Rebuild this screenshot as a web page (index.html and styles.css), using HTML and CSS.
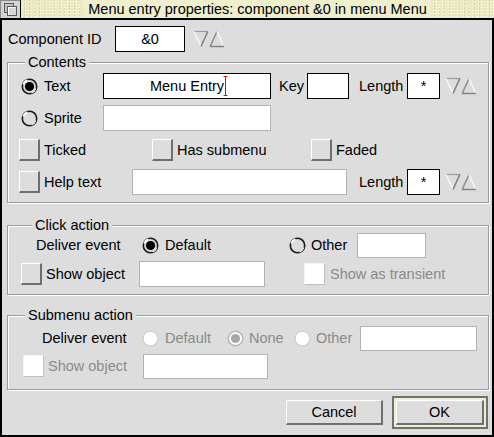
FILE: index.html
```html
<!DOCTYPE html>
<html lang="en">
<head>
<meta charset="utf-8">
<title>Menu entry properties</title>
<link rel="stylesheet" href="styles.css">
</head>
<body>
<svg class="defs" width="0" height="0" aria-hidden="true">
  <defs>
    <symbol id="radio" viewBox="0 0 17 17">
      <circle cx="8.5" cy="8.5" r="7.2" fill="#dddddd" stroke="#1a1a1a" stroke-width="1.6"/>
      <path d="M2.1 6.4 A7.2 7.2 0 0 1 6.4 2.1" fill="none" stroke="#ffffff" stroke-width="1.8"/>
      <path d="M14.9 10.6 A7.2 7.2 0 0 1 10.6 14.9" fill="none" stroke="#f0f0f0" stroke-width="1.2"/>
    </symbol>
    <symbol id="radio-on" viewBox="0 0 17 17">
      <circle cx="8.5" cy="8.5" r="7.2" fill="#dddddd" stroke="#1a1a1a" stroke-width="1.6"/>
      <path d="M2.1 6.4 A7.2 7.2 0 0 1 6.4 2.1" fill="none" stroke="#ffffff" stroke-width="1.8"/>
      <path d="M14.9 10.6 A7.2 7.2 0 0 1 10.6 14.9" fill="none" stroke="#f0f0f0" stroke-width="1.2"/>
      <circle cx="8.5" cy="8.5" r="4.6" fill="#000000"/>
    </symbol>
    <symbol id="radio-faded" viewBox="0 0 17 17">
      <circle cx="8.5" cy="8.5" r="7.4" fill="#ffffff" stroke="#c4c4c4" stroke-width="1"/>
    </symbol>
    <symbol id="radio-faded-on" viewBox="0 0 17 17">
      <circle cx="8.5" cy="8.5" r="7.2" fill="#ffffff" stroke="#b4b4b4" stroke-width="1.4"/>
      <circle cx="8.5" cy="8.5" r="4.6" fill="#a8a8a8"/>
    </symbol>
    <symbol id="adjusters" viewBox="0 0 33 18">
      <line x1="1" y1="1.5" x2="15" y2="1.5" stroke="#9a9a9a" stroke-width="1.2"/>
      <line x1="1.2" y1="1.5" x2="8" y2="16.5" stroke="#f6f6f6" stroke-width="1.6"/>
      <line x1="14.8" y1="1.5" x2="8" y2="16.5" stroke="#7c7c7c" stroke-width="1.5"/>
      <line x1="17.2" y1="16.5" x2="24" y2="1.5" stroke="#8c8c8c" stroke-width="1.5"/>
      <line x1="24" y1="1.5" x2="30.8" y2="16.5" stroke="#f6f6f6" stroke-width="1.6"/>
      <line x1="17" y1="16.5" x2="31" y2="16.5" stroke="#808080" stroke-width="1.4"/>
    </symbol>
  </defs>
</svg>
<div class="win">
  <div class="titlebar">
    <div class="backicon">
      <svg width="20" height="18" viewBox="0 0 20 18">
        <rect x="0" y="0" width="20" height="18" fill="#d4d4d4"/>
        <line x1="0" y1="0.5" x2="20" y2="0.5" stroke="#8a8a8a"/>
        <line x1="0.5" y1="0" x2="0.5" y2="18" stroke="#8a8a8a"/>
        <rect x="4.5" y="3.5" width="9" height="9" fill="#c8c8c8" stroke="#5a5a5a"/>
        <rect x="7.5" y="6.5" width="9" height="9" fill="#d8d8d8" stroke="#5a5a5a"/>
        <line x1="8.5" y1="7.5" x2="15.5" y2="7.5" stroke="#ffffff"/>
        <line x1="8.5" y1="7.5" x2="8.5" y2="14.5" stroke="#ffffff"/>
      </svg>
    </div>
    <div class="titlearea"><span class="titletext">Menu entry properties: component &amp;0 in menu Menu</span></div>
  </div>

  <div class="body">
    <div class="row idrow">
      <span class="lbl lbl-cid">Component ID</span>
      <span class="field black f-cid">&amp;0</span>
      <svg class="adjust adj-cid"><use href="#adjusters"/></svg>
    </div>

    <div class="frame f-contents">
      <div class="legend lg-contents">Contents</div>
      <div class="row c-row1">
        <svg class="radio rad-first"><use href="#radio-on"/></svg>
        <span class="lbl lbl-text">Text</span>
        <span class="field black f-text">Menu Entry<span class="caret"><svg width="5" height="20" viewBox="0 0 5 20"><line x1="2.5" y1="0" x2="2.5" y2="20" stroke="#d01010" stroke-width="1"/><line x1="0.5" y1="0.5" x2="4.5" y2="0.5" stroke="#d01010"/><line x1="0.5" y1="19.5" x2="4.5" y2="19.5" stroke="#d01010"/></svg></span></span>
        <span class="lbl lbl-key">Key</span>
        <span class="field black f-key"></span>
        <span class="lbl lbl-len">Length</span>
        <span class="field black f-len">*</span>
        <svg class="adjust adj-row"><use href="#adjusters"/></svg>
      </div>
      <div class="row c-row">
        <svg class="radio rad-first"><use href="#radio"/></svg>
        <span class="lbl lbl-text">Sprite</span>
        <span class="field grey f-text"></span>
      </div>
      <div class="row c-row">
        <span class="cb cb-first"></span>
        <span class="lbl lbl-ticked">Ticked</span>
        <span class="cb"></span>
        <span class="lbl lbl-sub">Has submenu</span>
        <span class="cb"></span>
        <span class="lbl lbl-cbtext">Faded</span>
      </div>
      <div class="row c-row">
        <span class="cb cb-first"></span>
        <span class="lbl lbl-help">Help text</span>
        <span class="field grey f-help"></span>
        <span class="lbl lbl-len2">Length</span>
        <span class="field black f-len">*</span>
        <svg class="adjust adj-row"><use href="#adjusters"/></svg>
      </div>
    </div>

    <div class="frame f-click">
      <div class="legend lg-click">Click action</div>
      <div class="row k-row1">
        <span class="lbl lbl-deliver1">Deliver event</span>
        <svg class="radio"><use href="#radio-on"/></svg>
        <span class="lbl lbl-default1">Default</span>
        <svg class="radio"><use href="#radio"/></svg>
        <span class="lbl lbl-other1">Other</span>
        <span class="field grey f-other1"></span>
      </div>
      <div class="row k-row2">
        <span class="cb cb-show1"></span>
        <span class="lbl lbl-show1">Show object</span>
        <span class="field grey f-show1"></span>
        <span class="cb faded cb-trans"></span>
        <span class="lbl faded-text lbl-trans">Show as transient</span>
      </div>
    </div>

    <div class="frame f-submenu">
      <div class="legend lg-submenu">Submenu action</div>
      <div class="row s-row1">
        <span class="lbl lbl-deliver2">Deliver event</span>
        <svg class="radio"><use href="#radio-faded"/></svg>
        <span class="lbl faded-text lbl-default2">Default</span>
        <svg class="radio"><use href="#radio-faded-on"/></svg>
        <span class="lbl faded-text lbl-none">None</span>
        <svg class="radio"><use href="#radio-faded"/></svg>
        <span class="lbl faded-text lbl-other2">Other</span>
        <span class="field grey f-other2"></span>
      </div>
      <div class="row s-row2">
        <span class="cb faded cb-show2"></span>
        <span class="lbl faded-text lbl-show2">Show object</span>
        <span class="field grey f-show2"></span>
      </div>
    </div>

    <div class="btnrow">
      <span class="btn btn-cancel">Cancel</span>
      <span class="okouter"><span class="btn btn-ok">OK</span></span>
    </div>
  </div>
</div>
</body>
</html>
```

FILE: styles.css
```css
* { box-sizing: border-box; }
html, body { margin: 0; padding: 0; }
body {
  width: 494px;
  height: 437px;
  overflow: hidden;
  background: #dddddd;
  font-family: "Liberation Sans", Arial, sans-serif;
  font-size: 14.5px;
  color: #000;
}
.defs { display: block; width: 0; height: 0; overflow: hidden; }

.win { width: 494px; height: 437px; display: flex; flex-direction: column; }

/* title bar */
.titlebar { flex: none; height: 20px; display: flex; border-bottom: 2px solid #000; }
.backicon { flex: none; width: 21px; height: 18px; border-right: 1px solid #000; }
.backicon svg { display: block; }
.titlearea {
  flex: 1;
  display: flex;
  justify-content: center;
  align-items: center;
  background-color: #ebe9c2;
  background-image:
    radial-gradient(circle, #fbfbee 0.7px, transparent 0.9px),
    radial-gradient(circle, #d9d6a6 0.6px, transparent 0.8px);
  background-size: 3px 3px, 5px 4px;
  background-position: 0 0, 1px 2px;
}
.titletext { background: #efeecd; padding: 0 4px; line-height: 18px; white-space: nowrap; }

/* dialog body */
.body {
  flex: 1;
  border: 2px solid #000;
  border-top: 0;
  padding: 0 3px 0 5px;
  display: flex;
  flex-direction: column;
}

.row { flex: none; display: flex; align-items: center; height: 26px; }
.lbl { flex: none; white-space: nowrap; line-height: 16px; }
.faded-text { color: #8a8a8a; }

.field {
  flex: none;
  height: 26px;
  background: #fff;
  display: flex;
  align-items: center;
  justify-content: center;
  white-space: nowrap;
}
.field.black { border: 1px solid #000; }
.field.grey { border: 1px solid #b4b4b4; }

.caret { display: inline-block; width: 0; height: 20px; overflow: visible; }
.caret svg { display: block; margin-left: -1px; }

.radio { flex: none; width: 17px; height: 17px; display: block; }
.adjust { flex: none; width: 33px; height: 18px; display: block; }

.cb {
  flex: none;
  width: 21px;
  height: 22px;
  background: #dddddd;
  border-top: 1px solid #ffffff;
  border-left: 1px solid #ffffff;
  border-right: 2px solid #6e6e6e;
  border-bottom: 2px solid #6e6e6e;
}
.cb.faded {
  background: #ffffff;
  border-top: 1px solid #f4f4f4;
  border-left: 1px solid #f4f4f4;
  border-right: 1px solid #c0c0c0;
  border-bottom: 1px solid #c0c0c0;
}

/* frames */
.frame {
  flex: none;
  display: flex;
  flex-direction: column;
  border: 1px solid #9c9c9c;
  box-shadow: inset 1px 1px 0 #ffffff, 1px 1px 0 #ffffff;
}
.legend {
  align-self: flex-start;
  background: #dddddd;
  padding: 0 3px;
  height: 14px;
  line-height: 14px;
  margin-top: -8px;
  white-space: nowrap;
}

/* component id */
.idrow { margin-top: 6px; }
.lbl-cid { margin-left: 1px; width: 107px; }
.f-cid { width: 70px; }
.adj-cid { margin-left: 8px; }

/* contents */
.f-contents { margin-top: 10px; padding-bottom: 7px; }
.lg-contents { margin-left: 17px; }
.c-row1 { margin-top: 4px; }
.c-row { margin-top: 6px; }
.rad-first { margin-left: 13px; }
.lbl-text { margin-left: 6px; width: 59px; }
.f-text { width: 168px; }
.lbl-key { margin-left: 8px; width: 28px; }
.f-key { width: 42px; }
.lbl-len { margin-left: 10px; width: 48px; }
.f-len { width: 33px; align-items: flex-start; padding-top: 4px; }
.adj-row { margin-left: 5px; }
.cb-first { margin-left: 11px; }
.lbl-ticked { margin-left: 4px; width: 108px; }
.lbl-sub { margin-left: 4px; width: 134px; }
.lbl-cbtext { margin-left: 4px; }
.lbl-help { margin-left: 4px; width: 88px; }
.f-help { width: 215px; }
.lbl-len2 { margin-left: 12px; width: 48px; }

/* click action */
.f-click { margin-top: 22px; padding-bottom: 7px; }
.lg-click { margin-left: 24px; }
.k-row1 { margin-top: 0; }
.k-row2 { margin-top: 3px; }
.lbl-deliver1 { margin-left: 28px; width: 106px; }
.lbl-default1 { margin-left: 6px; width: 124px; }
.lbl-other1 { margin-left: 5px; width: 46px; }
.f-other1 { width: 69px; height: 25px; }
.cb-show1 { margin-left: 13px; }
.lbl-show1 { margin-left: 4px; width: 93px; }
.f-show1 { width: 126px; }
.cb-trans { margin-left: 39px; }
.lbl-trans { margin-left: 5px; }

/* submenu action */
.f-submenu { margin-top: 20px; padding-bottom: 10px; }
.lg-submenu { margin-left: 17px; }
.s-row1 { margin-top: 3px; }
.s-row2 { margin-top: 2px; }
.lbl-deliver2 { margin-left: 34px; width: 100px; }
.lbl-default2 { margin-left: 6px; width: 62px; }
.lbl-none { margin-left: 5px; width: 45px; }
.lbl-other2 { margin-left: 5px; width: 44px; }
.f-other2 { width: 117px; height: 25px; }
.cb-show2 { margin-left: 15px; }
.lbl-show2 { margin-left: 4px; width: 95px; }
.f-show2 { width: 125px; height: 25px; }

/* buttons */
.btnrow {
  flex: none;
  margin-top: 6px;
  height: 33px;
  display: flex;
  align-items: center;
  justify-content: flex-end;
  gap: 9px;
  padding-right: 1px;
}
.btn {
  display: flex;
  align-items: center;
  justify-content: center;
  height: 25px;
  background: #dddddd;
  border-top: 1px solid #ffffff;
  border-left: 1px solid #ffffff;
  border-right: 2px solid #6e6e6e;
  border-bottom: 2px solid #6e6e6e;
}
.btn-cancel { width: 97px; }
.okouter {
  display: flex;
  width: 96px;
  height: 33px;
  border: 2px solid #707070;
  padding: 2px;
  background: #efefcf;
}
.btn-ok { flex: 1; }
```
